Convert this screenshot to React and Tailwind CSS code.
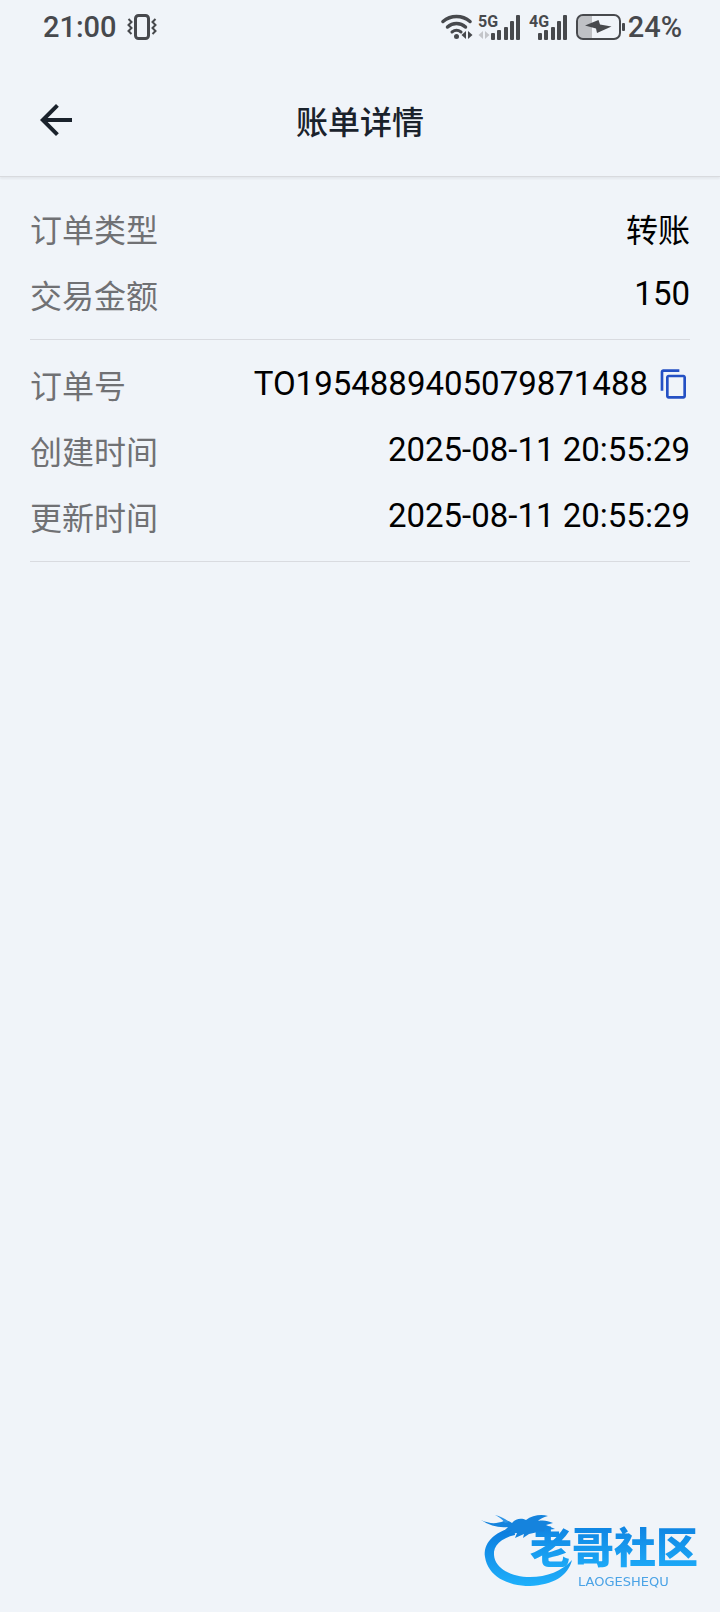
import React, { useState } from 'react';
import { MdArrowBack, MdContentCopy } from 'react-icons/md';

const order = {
  type: '转账',
  amount: '150',
  orderNo: 'TO1954889405079871488',
  createdAt: '2025-08-11 20:55:29',
  updatedAt: '2025-08-11 20:55:29',
};

function VibrateIcon() {
  return (
    <svg width="30" height="26" viewBox="0 0 30 26" fill="none" stroke="currentColor" aria-hidden="true">
      <rect x="8.5" y="1.5" width="13" height="23" rx="3" strokeWidth="3" />
      <path d="M1.500 5l3 3-3 3 3 3-3 3 3 3" strokeWidth="2" />
      <path d="M28.500 5l-3 3 3 3-3 3 3 3-3 3" strokeWidth="2" />
    </svg>
  );
}

function WifiIcon() {
  return (
    <svg width="32" height="26" viewBox="0 0 32 26" fill="none" stroke="currentColor" aria-hidden="true">
      <path d="M2 7.500a21 21 0 0 1 27 0" strokeWidth="3.500" strokeLinecap="round" />
      <path d="M6.500 13a13.500 13.500 0 0 1 18 0" strokeWidth="3.500" strokeLinecap="round" />
      <path d="M11 18a7.500 7.500 0 0 1 9 0" strokeWidth="3" strokeLinecap="round" />
      <circle cx="15.500" cy="22.500" r="2.500" fill="currentColor" stroke="none" />
      <path d="M25 17v8l-4.500-4zM27 17v8l4.500-4z" fill="currentColor" stroke="none" />
    </svg>
  );
}

function SignalIcon({ label, idle }) {
  return (
    <svg width={idle ? 43 : 39} height="28" viewBox={idle ? '0 0 43 28' : '4 0 39 28'} fill="currentColor" aria-hidden="true">
      <text x={idle ? 0 : 4} y="14" fontSize="16" fontWeight="700" fontFamily="Roboto, sans-serif">{label}</text>
      {idle && <path d="M5 18v8l-4.500-4zM7 18v8l4.500-4z" fill="#c3c5c9" />}
      <rect x="13" y="20" width="4" height="7" rx="1" />
      <rect x="19" y="17" width="4" height="10" rx="1" />
      <rect x="26" y="14" width="4" height="13" rx="1" />
      <rect x="32" y="8" width="4" height="19" rx="1" />
      <rect x="38" y="2" width="4" height="25" rx="1" />
    </svg>
  );
}

function BatteryIcon() {
  return (
    <svg width="50" height="26" viewBox="0 0 50 26" fill="none" aria-hidden="true">
      <path d="M7 2h9v22H7a5 5 0 0 1-5-5V7a5 5 0 0 1 5-5z" fill="#bfc1c5" />
      <rect x="1" y="1" width="43" height="24" rx="6" stroke="currentColor" strokeWidth="2" />
      <path d="M9 11.500L22.500 6l1.500 4.500 11.500 2L21 19l-1-4.500z" fill="currentColor" />
      <rect x="46" y="9" width="3" height="8" rx="1" fill="currentColor" />
    </svg>
  );
}

function StatusBar() {
  return (
    <div className="flex items-center justify-between pt-[11px] pb-[21px] pl-[43px] pr-[38px] text-[#47494d] font-['Roboto',sans-serif] font-medium text-[29px] leading-8">
      <div className="flex items-center gap-[10px]">
        <span>21:00</span>
        <VibrateIcon />
      </div>
      <div className="flex items-center">
        <WifiIcon />
        <div className="flex items-center gap-2 ml-[5px] mr-2">
          <SignalIcon label="5G" idle />
          <SignalIcon label="4G" />
        </div>
        <BatteryIcon />
        <span className="ml-[2px]">24%</span>
      </div>
    </div>
  );
}

function Row({ label, children }) {
  return (
    <div className="flex items-center justify-between leading-[66px]">
      <dt className="text-[32px] text-[#707174]">{label}</dt>
      <dd className="flex items-center gap-[10px] text-[33px] text-black font-['Roboto',sans-serif]">{children}</dd>
    </div>
  );
}

function Watermark() {
  return (
    <svg className="fixed right-4 bottom-6 z-10" width="224" height="76" viewBox="0 0 224 76" role="img" aria-label="老哥社区">
      <defs>
        <linearGradient id="brand" x1="0" y1="0" x2="0" y2="1">
          <stop offset="0" stopColor="#0b79dc" />
          <stop offset="1" stopColor="#1fb0fb" />
        </linearGradient>
      </defs>
      <path d="M34 15C13 20 3 32 5 45c3 19 22 29 45 29 23-1 38-10 42-26-10 11-25 17-42 17-18 0-35-8-36-22-1-9 7-17 21-20z" fill="url(#brand)" />
      <path d="M1 8c9 4 15 4 23 1 3-1 5 0 8 2 4-5 10-5 14-3 6-5 16-6 22-4-5 1-8 3-10 5 6-1 10 0 15 2l-7 2 9 4-8 1 3 4-12-2-9 2-6 4 1-4-9 4 2-5-9 1 4-4-9 2 5-5c-9 1-18-1-27-7z" fill="#1583dd" />
      <path d="M15 3c5 1 9 3 14 7l-4 1c-3-4-6-6-10-8z" fill="#2f95e6" />
      <text x="50" y="51" fontSize="42" fontWeight="900" fontFamily="'Noto Sans CJK SC', sans-serif" fill="url(#brand)">老哥社区</text>
      <text x="98" y="74" fontSize="13" fontFamily="'DejaVu Sans', sans-serif" fill="#4ba3e6">LAOGESHEQU</text>
    </svg>
  );
}

function App() {
  const [copied, setCopied] = useState(false);

  const handleCopy = () => {
    navigator.clipboard?.writeText(order.orderNo);
    setCopied(true);
  };

  return (
    <div className="min-h-screen bg-[#f0f4f9] font-['Noto_Sans_CJK_SC',sans-serif]">
      <StatusBar />

      {/* Header */}
      <header className="grid grid-cols-[1fr_auto_1fr] items-center h-[113px] px-8 border-b border-[#d8dade] shadow-[0_2px_2px_rgba(0,0,0,0.05)]">
        <button type="button" aria-label="返回" onClick={() => window.history.back()} className="justify-self-start text-[#1a222c]">
          <MdArrowBack size={48} />
        </button>
        <h1 className="text-[32px] leading-10 font-medium text-[#1a222c]">账单详情</h1>
      </header>

      {/* Order details */}
      <main className="px-[30px] pt-[7px]">
        <dl className="pt-[11px] pb-3 border-b border-[#d9dbe0]">
          <Row label="订单类型">
            <span className="font-['Noto_Sans_CJK_SC',sans-serif] text-[32px]">{order.type}</span>
          </Row>
          <Row label="交易金额">{order.amount}</Row>
        </dl>
        <dl className="pt-[11px] pb-3 border-b border-[#d9dbe0]">
          <Row label="订单号">
            {order.orderNo}
            <button type="button" aria-label="复制" onClick={handleCopy} className={copied ? 'text-[#16348f]' : 'text-[#2450c4]'}>
              <MdContentCopy size={32} />
            </button>
          </Row>
          <Row label="创建时间">{order.createdAt}</Row>
          <Row label="更新时间">{order.updatedAt}</Row>
        </dl>
      </main>

      <Watermark />
    </div>
  );
}

export default App;
